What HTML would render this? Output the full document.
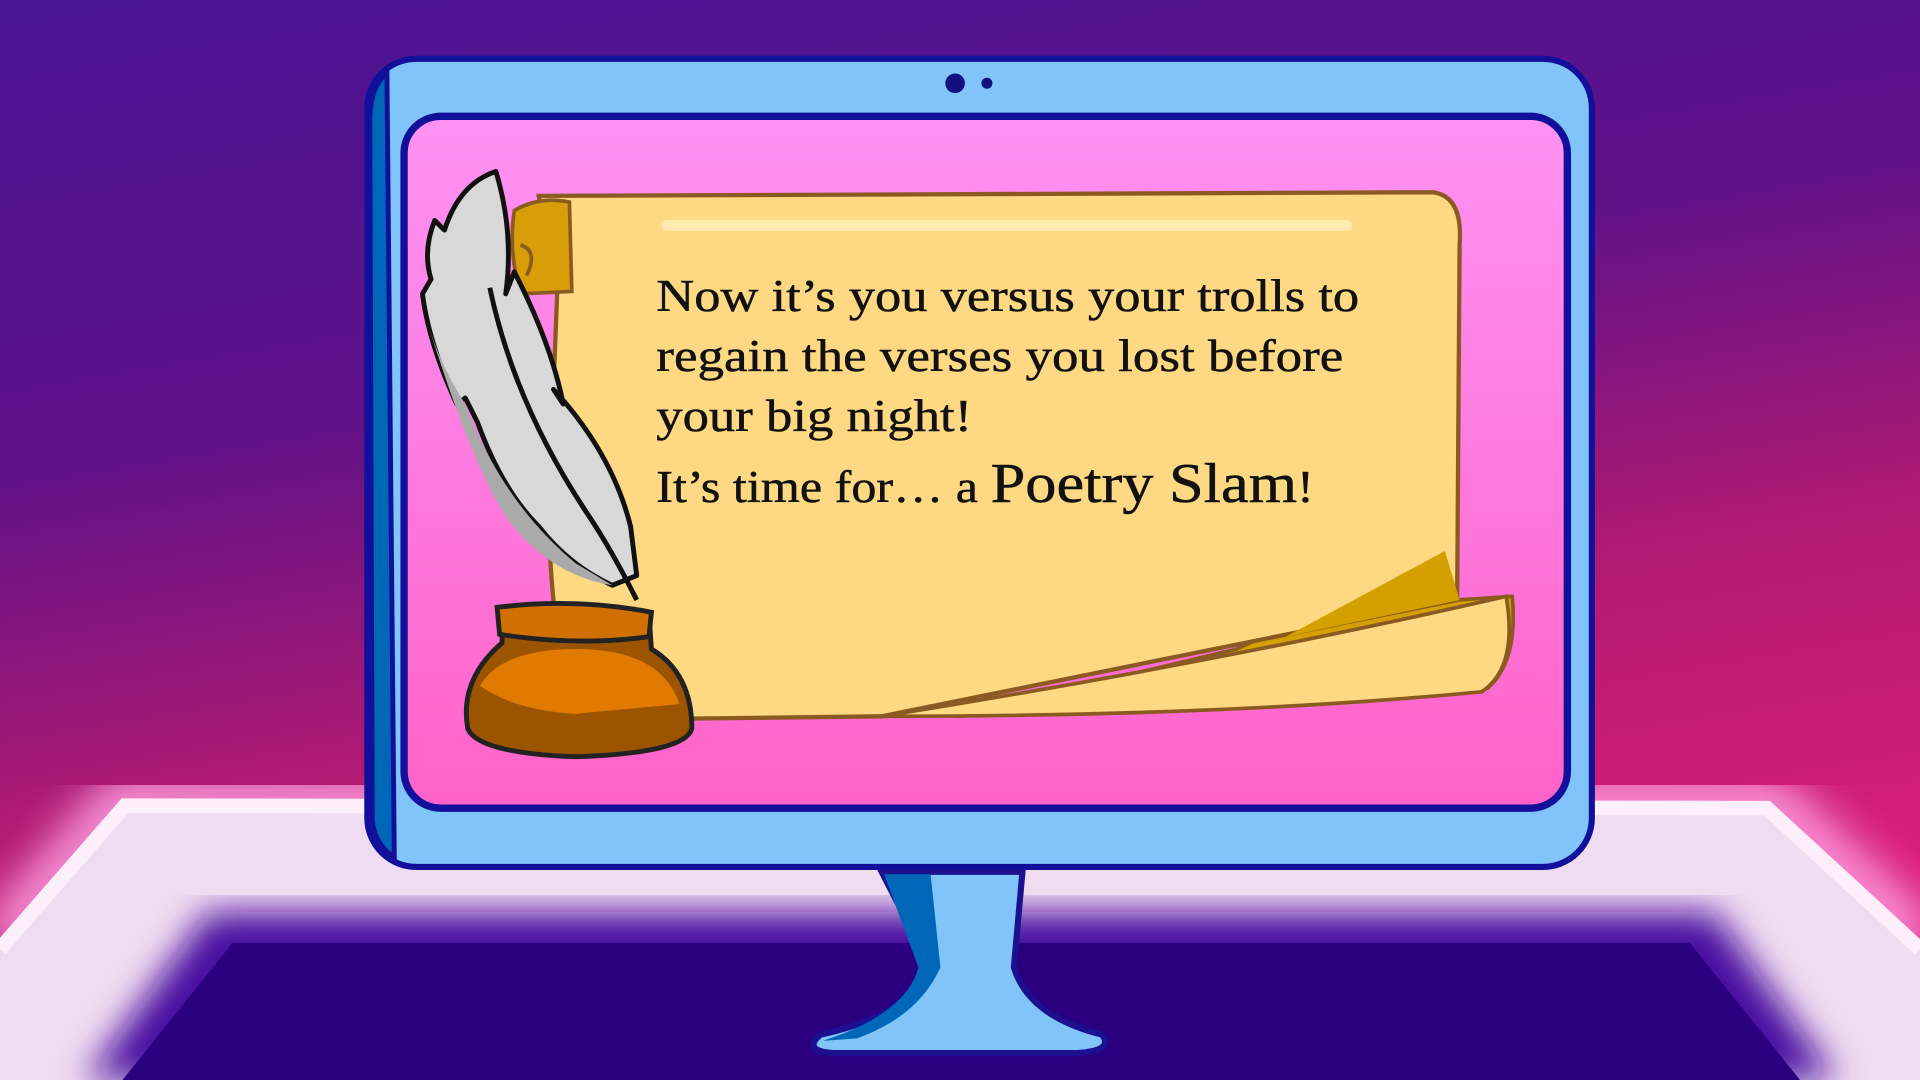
<!DOCTYPE html>
<html><head><meta charset="utf-8"><style>
html,body{margin:0;padding:0;width:1920px;height:1080px;overflow:hidden;background:#4a148f}
svg{display:block}
</style></head><body>
<svg width="1920" height="1080" viewBox="0 0 1568 882" preserveAspectRatio="none" xmlns="http://www.w3.org/2000/svg">
<defs>
<linearGradient id="bg" x1="0" y1="0" x2="0.3" y2="1">
<stop offset="0" stop-color="#4a1494"/><stop offset="0.4" stop-color="#5e1288"/><stop offset="0.7" stop-color="#b01a72"/><stop offset="1" stop-color="#d81e78"/></linearGradient>
<linearGradient id="scr" x1="0" y1="0" x2="0" y2="1"><stop offset="0" stop-color="#ff92f4"/><stop offset="1" stop-color="#ff62c8"/></linearGradient>
<filter id="bl"><feGaussianBlur stdDeviation="14"/></filter>
<filter id="bl2"><feGaussianBlur stdDeviation="18"/></filter>
</defs>
<rect width="1568" height="882" fill="url(#bg)"/>
<!-- desk glow -->
<polyline points="0,770 100,653 1445,655 1568,770" fill="none" stroke="#ff9ee0" stroke-width="40" filter="url(#bl2)"/>
<!-- desk -->
<polygon points="100,653 1445,655 1568,770 1568,882 0,882 0,770" fill="#f0dcf0"/>
<polyline points="0,775 102,658 1443,660 1568,775" fill="none" stroke="#fdeefc" stroke-width="12"/>
<polygon points="170,745 1400,745 1500,882 70,882" fill="#4a10a0" filter="url(#bl)"/>
<polygon points="190,770 1380,770 1470,882 100,882" fill="#2a007e"/>
<!-- stand -->
<path d="M720,712 L835,712 L828,790 Q840,830 900,845 Q910,858 880,860 L680,860 Q655,858 670,845 Q740,830 760,790 Z" fill="#80c4fa" stroke="#1a1090" stroke-width="5"/>
<path d="M722,714 L760,714 L768,790 Q750,830 700,848 L672,850 Q740,828 750,790 Z" fill="#0066b8"/>
<!-- monitor -->
<rect x="300" y="48" width="1000" height="660" rx="40" fill="#80c4fa" stroke="#12109a" stroke-width="5"/>
<path d="M302,100 Q302,70 316,60 L322,700 Q306,690 304,670 Z" fill="#0066b8" stroke="#12109a" stroke-width="4"/>
<circle cx="780" cy="68" r="8" fill="#101080"/><circle cx="806" cy="68" r="4.5" fill="#101080"/>
<rect x="330" y="95" width="950" height="565" rx="30" fill="url(#scr)" stroke="#12109a" stroke-width="6"/>
<!-- scroll -->
<path d="M1180,450 L1190,490 L1235,487 Q1240,540 1215,562 L780,585 L1010,530 Z" fill="#d4a000" stroke="#8a5a20" stroke-width="3"/>
<path d="M440,160 L1170,157 Q1195,160 1192,200 L1190,490 Q1020,525 720,585 L470,588 Q450,520 448,420 L455,240 Z" fill="#fed882" stroke="#8a5a20" stroke-width="3.5"/>
<path d="M545,184 L1100,184" stroke="#ffeab0" stroke-width="9" stroke-linecap="round"/>
<path d="M1180,450 L1192,490 L1050,520 Z" fill="#d4a000"/>
<path d="M720,585 Q1000,540 1230,487 Q1240,545 1210,565 Q1000,585 720,585 Z" fill="#fed882" stroke="#8a5a20" stroke-width="3"/>
<path d="M420,172 Q440,160 465,165 L467,238 L425,240 Q415,205 420,172 Z" fill="#d89e08" stroke="#8a5a20" stroke-width="3"/>
<path d="M425,200 Q440,205 430,225" fill="none" stroke="#8a5a20" stroke-width="3"/>
<!-- feather -->
<path d="M405,140 Q420,190 413,240 L420,222 Q450,280 460,330 L452,318 Q500,370 515,430 L520,470 L500,478 Q465,462 440,430 Q410,400 390,345 L380,325 L373,330 Q350,280 345,240 L352,228 Q345,205 355,180 L363,188 Q375,150 405,140 Z" fill="#d8d8d8" stroke="#111" stroke-width="4" stroke-linejoin="round"/>
<path d="M348,260 Q360,300 380,330 Q410,410 470,460 L500,478 Q450,470 415,425 Q385,380 348,260 Z" fill="#aaa"/>
<path d="M400,235 Q420,330 480,420 Q500,450 520,490" fill="none" stroke="#111" stroke-width="4"/>
<!-- ink pot -->
<path d="M410,500 Q470,490 530,502 L532,530 Q565,550 565,595 Q560,615 470,618 Q390,615 382,595 Q375,555 410,525 Z" fill="#9c5400" stroke="#222" stroke-width="4"/>
<path d="M392,560 Q410,530 470,530 Q540,530 555,575 Q500,580 470,583 Q420,580 392,560 Z" fill="#e07a00"/>
<path d="M406,496 Q470,488 532,500 L530,520 Q470,528 408,518 Z" fill="#d07000" stroke="#222" stroke-width="4"/>
<!-- text -->
<g font-family="'Liberation Serif',serif" fill="#111" font-size="37" stroke="#111" stroke-width="0.4">
<text x="536" y="254" textLength="574" lengthAdjust="spacingAndGlyphs">Now it’s you versus your trolls to</text>
<text x="536" y="303" textLength="561" lengthAdjust="spacingAndGlyphs">regain the verses you lost before</text>
<text x="536" y="352" textLength="258" lengthAdjust="spacingAndGlyphs">your big night!</text>
<text x="536" y="410" textLength="537" lengthAdjust="spacingAndGlyphs">It’s time for… a <tspan font-size="46">Poetry Slam</tspan>!</text>
</g>
</svg>
</body></html>
